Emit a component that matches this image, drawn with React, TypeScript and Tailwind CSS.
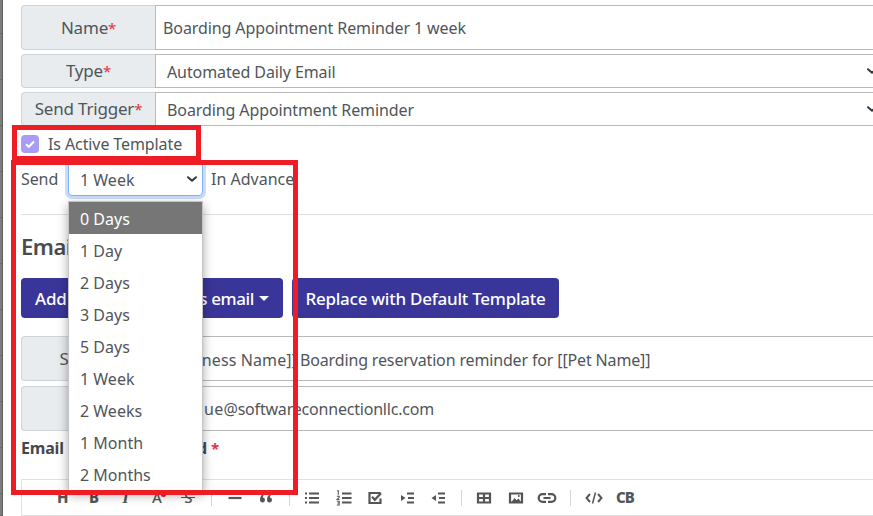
import type { ReactNode } from "react";

const options = [
  "0 Days", "1 Day", "2 Days", "3 Days", "5 Days",
  "1 Week", "2 Weeks", "1 Month", "2 Months",
];

const strip = [34, 46, 46, 46, 46, 46, 46, 46, 46, 46, 46, 22];

function Chevron() {
  return (
    <svg width="12" height="12" viewBox="0 0 12 12" fill="none" stroke="#343a40" strokeWidth="2" strokeLinecap="round" strokeLinejoin="round" className="shrink-0">
      <path d="M2 4.2 L6 7.8 L10 4.2" />
    </svg>
  );
}

function Star() {
  return <span className="text-[15px] text-[#e5323f]">*</span>;
}

type RowProps = { label: ReactNode; height: string; children: ReactNode };

function Row({ label, height, children }: RowProps) {
  return (
    <div className={`flex ${height}`}>
      <div className="flex w-[134px] shrink-0 items-center justify-center rounded-l-[4px] border border-r-0 border-[#ced4da] bg-[#e8ecef] text-[17px] tracking-[-0.2px]">
        <span>{label}</span>
      </div>
      <div className="flex flex-1 items-center border border-r-0 border-[#b9b9b9] whitespace-nowrap">{children}</div>
    </div>
  );
}

function Tool({ children }: { children: ReactNode }) {
  return <div className="flex h-4 w-[31.4px] shrink-0 items-center justify-center">{children}</div>;
}

function Sep() {
  return (
    <div className="flex h-[16px] w-[15px] shrink-0 justify-center">
      <div className="w-px bg-[#d5d5d5]" />
    </div>
  );
}

function Icon({ children, w = 16 }: { children: ReactNode; w?: number }) {
  return (
    <svg width={w} height="16" viewBox={`0 0 ${w} 16`} fill="none" stroke="#555" strokeWidth="2.2">
      {children}
    </svg>
  );
}

function Toolbar() {
  return (
    <div className="flex h-[37px] items-center border border-r-0 border-[#e0e0e0] pl-[25px] text-[15px] leading-none font-extrabold text-[#555]">
      <Tool>H</Tool>
      <Tool>B</Tool>
      <Tool><span className="font-['Liberation_Serif',serif] text-[17px] italic">I</span></Tool>
      <Tool>
        <span className="relative font-medium">A<span className="absolute top-[1.5px] -right-[4px] size-[5px] rounded-full bg-[#e8202c]" /></span>
      </Tool>
      <Tool>
        <span className="relative flex items-center justify-center font-medium">
          S
          <span className="absolute h-[1.5px] w-[14px] bg-[#555]" />
        </span>
      </Tool>
      <Sep />
      <Tool><Icon><path d="M1.5 8h13" /></Icon></Tool>
      <Tool>
        <Icon>
          <path d="M2 10.2C2 7.4 3.2 5 5.6 3.6h1.4C5.6 5 5 6.2 4.9 7.6A2.5 2.5 0 1 1 2 10.2zM9 10.2C9 7.4 10.2 5 12.6 3.6H14C12.6 5 12 6.2 11.9 7.6A2.5 2.5 0 1 1 9 10.2z" fill="#555" stroke="none" />
        </Icon>
      </Tool>
      <Sep />
      <Tool><Icon><path d="M5 3.5h10M5 8h10M5 12.5h10" /><path d="M1 3.5h2M1 8h2M1 12.5h2" /></Icon></Tool>
      <Tool>
        <Icon>
          <path d="M6 3.5h9.5M6 8h9.5M6 12.5h9.5" />
          <path d="M1 .8h1.3v4M.8 6.3h2.4v1L1 9.5h2.5M.8 11.3h2.4v1.7H1.5 3.2v2H.8" strokeWidth="1.1" />
        </Icon>
      </Tool>
      <Tool><Icon><path d="M13.5 8.5v4.5h-11V3h11" /><path d="M5 6.8l2.8 3 6.2-6.6" /></Icon></Tool>
      <Tool><Icon><path d="M8 3.5h7M9 8h6M8 12.5h7" /><path d="M2 5v6l4.5-3z" fill="#555" stroke="none" /></Icon></Tool>
      <Tool><Icon><path d="M8 3.5h7M9 8h6M8 12.5h7" /><path d="M6 5v6L1.5 8z" fill="#555" stroke="none" /></Icon></Tool>
      <Sep />
      <Tool><Icon><path d="M2 3.5h12v9H2zM2 8h12M8 3.5v9" /></Icon></Tool>
      <Tool>
        <Icon>
          <path d="M2 3.5h12v9H2z" />
          <path d="M3.5 12l3-4 2.2 2.2L10.5 8.5 13 12z" fill="#555" stroke="none" />
          <circle cx="10.8" cy="6" r="1" fill="#555" stroke="none" />
        </Icon>
      </Tool>
      <Tool><Icon w={20}><path d="M9 4.2H5.5a3.8 3.8 0 0 0 0 7.6h3.5M11 4.2h3.5a3.8 3.8 0 0 1 0 7.6H11M6.5 8h7" /></Icon></Tool>
      <Sep />
      <Tool><Icon w={20}><path d="M6 4L2.5 8 6 12M14 4l3.5 4L14 12" strokeWidth="1.9" /><path d="M11.5 2.5l-3 11" strokeWidth="1.5" /></Icon></Tool>
      <Tool><span className="tracking-[-0.9px]">CB</span></Tool>
    </div>
  );
}

export default function App() {
  return (
    <div className="relative flex h-[516px] w-[873px] overflow-hidden bg-white font-['Noto_Sans',sans-serif] text-[16px] tracking-[-0.1px] text-[#50555a]">
      <div className="flex w-[3px] shrink-0 flex-col border-r border-[#5e5e5e] bg-[#7d7d7d]">
        {strip.map((h, i) => (
          <div key={i} style={{ height: h }} className="shrink-0 border-b border-[#6a6a6a]" />
        ))}
      </div>

      <main className="flex w-[870px] shrink-0 flex-col pt-[5px] pl-[18px]">
        <div className="flex flex-col gap-1">
          <Row label={<>Name<Star /></>} height="h-[45px]">
            <span className="pl-[7px]">Boarding Appointment Reminder 1 week</span>
          </Row>
          <Row label={<>Type<Star /></>} height="h-[34px]">
            <span className="w-[710px] shrink-0 pt-px pl-[11px]">Automated Daily Email</span>
            <Chevron />
          </Row>
          <Row label={<>Send Trigger<Star /></>} height="h-[34px]">
            <span className="w-[710px] shrink-0 pt-px pl-[11px]">Boarding Appointment Reminder</span>
            <Chevron />
          </Row>
        </div>

        <div className="mt-[9px] flex h-[18px] items-center">
          <span className="flex size-[18px] items-center justify-center rounded-[4px] bg-[#a99cf5]">
            <svg width="10" height="10" viewBox="0 0 10 10" fill="none" stroke="#fff" strokeWidth="2">
              <path d="M1 5.2L3.8 7.8 9 2.5" />
            </svg>
          </span>
          <span className="ml-[9px]">Is Active Template</span>
        </div>

        <div className="mt-[9px] flex h-[34px] items-center">
          <span className="w-[47px]">Send</span>
          <div className="relative flex h-[34px] w-[135px] items-center justify-between rounded-[4px] border border-[#7fb2f5] bg-white pr-[4px] pl-[11px] shadow-[0_0_0_3px_#cbdcfa]">
            <span className="pt-px tracking-normal">1 Week</span>
            <Chevron />
            <ul className="absolute top-[38px] -left-px z-10 h-[290px] w-[135px] border border-[#c4c4c4] bg-white tracking-normal shadow-[0_4px_10px_rgba(0,0,0,0.35)]">
              {options.map((o, i) => (
                <li
                  key={o}
                  className={`flex h-8 items-center pt-[2px] pl-[11px] ${i === 0 ? "bg-[#767676] text-white" : ""}`}
                >
                  {o}
                </li>
              ))}
            </ul>
          </div>
          <span className="ml-2 tracking-normal">In Advance</span>
        </div>

        <div className="mt-[18px] h-px bg-[#e0e0e0]" />

        <h2 className="mt-[15px] h-[33px] text-[22px] leading-[32px] font-semibold tracking-[-0.5px] text-[#484c50]">Email</h2>

        <div className="mt-[15px] flex gap-[9px] font-medium text-white">
          <button className="flex h-10 w-[262px] items-center justify-between rounded-[4px] bg-[#3a3599] px-[14px] pt-px text-[17px]">
            <span className="tracking-[-0.2px]">Add</span>
            <span className="flex items-center gap-[5px] tracking-[-0.4px]">
              fields to this email
              <span className="border-x-[5px] border-t-[5px] border-x-transparent border-t-white" />
            </span>
          </button>
          <button className="h-10 w-[267px] rounded-[4px] bg-[#3a3599] pt-px text-[17px] tracking-[-0.25px] whitespace-nowrap">Replace with Default Template</button>
        </div>

        <div className="mt-[18px] flex flex-col gap-[5px]">
          <Row label={<span className="pl-[7px]">Subject<Star /></span>} height="h-[45px]">
            <span className="w-[141px] shrink-0 pt-[2px] text-right tracking-[0.1px]">[[Business Name]]</span>
            <span className="pt-[2px] pl-[3px] tracking-[-0.15px]">Boarding reservation reminder for [[Pet Name]]</span>
          </Row>
          <Row label="To" height="h-[45px]">
            <span className="flex w-[278px] shrink-0 justify-end tracking-[-0.2px]">
              <span className="tracking-[0.3px]"><span className="tracking-[2px]">s</span>ue</span>@softwareconnectionllc.com
            </span>
          </Row>
        </div>

        <div className="mt-[5px] flex h-[24px] items-center font-bold tracking-[-0.2px] text-[#44484c]">
          <span className="w-[80px]">Email</span>
          <span className="w-[106px] text-right">Field Id</span>
          <span className="ml-1"><Star /></span>
        </div>
        <div className="mt-[19px]">
          <Toolbar />
        </div>
      </main>

      <div className="absolute top-[125px] left-[12px] z-20 h-[36px] w-[189px] border-[5px] border-[#ee1c24]" />
      <div className="absolute top-[160px] left-[11px] z-20 h-[335px] w-[287px] border-[5px] border-[#ee1c24]" />
    </div>
  );
}
